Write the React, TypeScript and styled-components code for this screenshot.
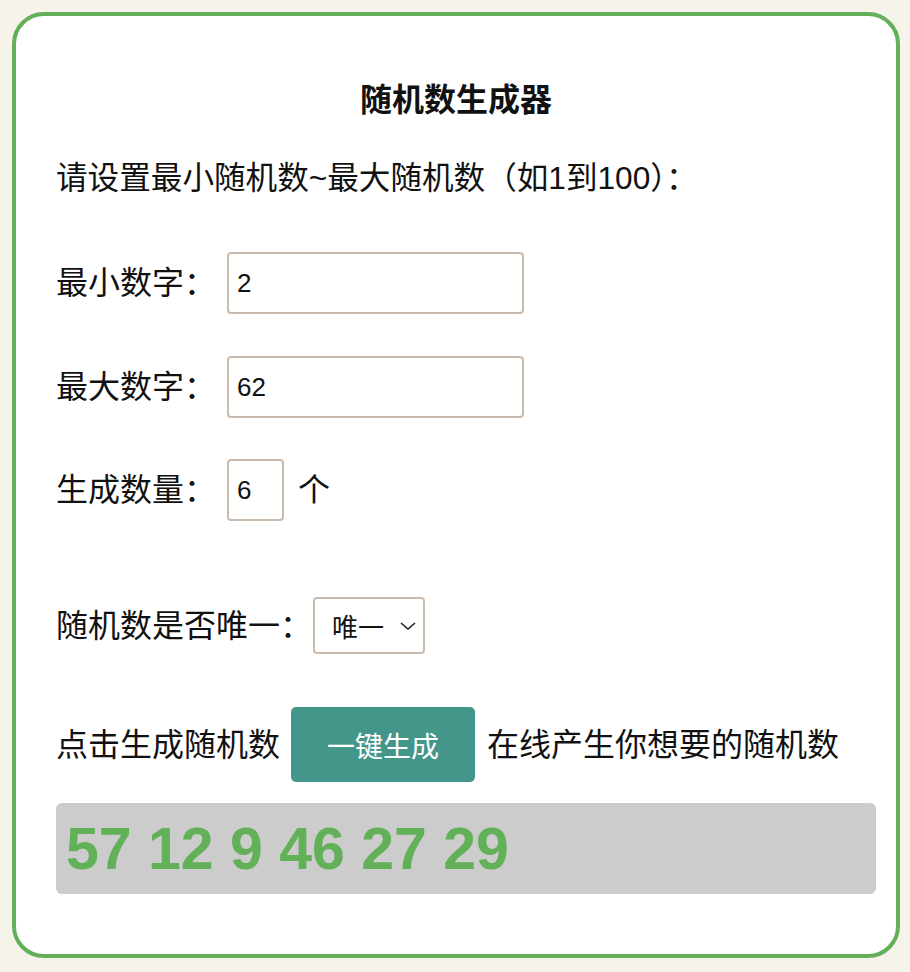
import React, { useState } from "react";
import styled, { createGlobalStyle } from "styled-components";

const GlobalStyle = createGlobalStyle`
  html, body {
    margin: 0;
    padding: 0;
    background: #f6f3ea;
  }
  body {
    font-family: "Liberation Sans", "Noto Sans CJK SC", sans-serif;
    color: #111;
  }
  * {
    box-sizing: border-box;
  }
`;

const App = () => {
  const [min, setMin] = useState("2");
  const [max, setMax] = useState("62");
  const [count, setCount] = useState("6");
  const [unique, setUnique] = useState("1");
  const [result, setResult] = useState([57, 12, 9, 46, 27, 29]);

  const generate = () => {
    const lo = parseInt(min, 10) || 0;
    const hi = parseInt(max, 10) || 0;
    const n = parseInt(count, 10) || 0;
    const list: number[] = [];
    let guard = 0;
    while (list.length < n && guard < 10000) {
      guard++;
      const v = lo + Math.floor(Math.random() * (hi - lo + 1));
      if (unique === "1" && list.includes(v)) continue;
      list.push(v);
    }
    setResult(list);
  };

  return (
    <Page>
      <GlobalStyle />
      <Card>
        <Title>随机数生成器</Title>
        <Intro>请设置最小随机数~最大随机数（如1到100）：</Intro>

        <Row $top={54} $height={62}>
          <Label>最小数字：</Label>
          <NumberInput $width={297} $gap={11} value={min} onChange={(e) => setMin(e.target.value)} />
        </Row>
        <Row $top={42} $height={62}>
          <Label>最大数字：</Label>
          <NumberInput $width={297} $gap={11} value={max} onChange={(e) => setMax(e.target.value)} />
        </Row>
        <Row $top={41} $height={62}>
          <Label>生成数量：</Label>
          <NumberInput $width={57} $gap={11} value={count} onChange={(e) => setCount(e.target.value)} />
          <Unit>个</Unit>
        </Row>

        <Row $top={76} $height={57}>
          <Label>随机数是否唯一：</Label>
          <SelectWrap>
            <Select value={unique} onChange={(e) => setUnique(e.target.value)}>
              <option value="1">唯一</option>
              <option value="0">可重复</option>
            </Select>
            <Chevron width="16" height="8" viewBox="0 0 16 8">
              <path d="M1 1l7 6 7-6" fill="none" stroke="#222" strokeWidth="1.6" />
            </Chevron>
          </SelectWrap>
        </Row>

        <Row $top={53} $height={75}>
          <Label>点击生成随机数</Label>
          <GenerateButton onClick={generate}>一键生成</GenerateButton>
          <Label>在线产生你想要的随机数</Label>
        </Row>

        <ResultBox>{result.join(" ")}</ResultBox>
      </Card>
    </Page>
  );
};

export default App;

const Page = styled.div`
  width: 910px;
  padding: 12px 10px 14px 12px;
`;

const Card = styled.div`
  width: 888px;
  height: 946px;
  background: #ffffff;
  border: 4px solid #64b05a;
  border-radius: 32px;
  padding: 64px 20px 60px 20px;
`;

const Title = styled.h1`
  margin: 0;
  font-size: 32px;
  line-height: 40px;
  font-weight: 700;
  text-align: center;
`;

const Intro = styled.p`
  margin: 38px 0 0 20px;
  font-size: 31.6px;
  line-height: 40px;
`;

const Row = styled.div<{ $top: number; $height: number }>`
  display: flex;
  align-items: center;
  margin: ${(p) => p.$top}px 0 0 20px;
  height: ${(p) => p.$height}px;
`;

const Label = styled.span`
  font-size: 32px;
  line-height: 40px;
  white-space: nowrap;
`;

const NumberInput = styled.input<{ $width: number; $gap: number }>`
  width: ${(p) => p.$width}px;
  height: 62px;
  margin-left: ${(p) => p.$gap}px;
  padding: 0 8px;
  border: 2px solid #cbbbad;
  border-radius: 4px;
  font-family: "Liberation Sans", sans-serif;
  font-size: 26px;
  color: #111;
  outline: none;
`;

const Unit = styled.span`
  margin-left: 14px;
  font-size: 32px;
  line-height: 40px;
`;

const SelectWrap = styled.div`
  position: relative;
  margin-left: 1px;
  width: 112px;
  height: 57px;
`;

const Select = styled.select`
  appearance: none;
  width: 100%;
  height: 100%;
  padding: 0 0 0 17px;
  border: 2px solid #cbbbad;
  border-radius: 4px;
  background: #fff;
  font-family: "Noto Sans CJK SC", sans-serif;
  font-size: 26px;
  color: #111;
  outline: none;
`;

const Chevron = styled.svg`
  position: absolute;
  right: 9px;
  top: 25px;
  pointer-events: none;
`;

const GenerateButton = styled.button`
  margin: 0 12px 0 11px;
  width: 184px;
  height: 75px;
  border: none;
  border-radius: 5px;
  background: #45968a;
  color: #ffffff;
  font-family: "Noto Sans CJK SC", sans-serif;
  font-size: 28px;
  cursor: pointer;
`;

const ResultBox = styled.div`
  margin: 21px 0 0 20px;
  height: 91px;
  padding: 0 10px;
  display: flex;
  align-items: center;
  background: #cccccc;
  border-radius: 6px;
  color: #62b058;
  font-family: "Liberation Sans", sans-serif;
  font-size: 59px;
  font-weight: 700;
  white-space: pre;
`;
